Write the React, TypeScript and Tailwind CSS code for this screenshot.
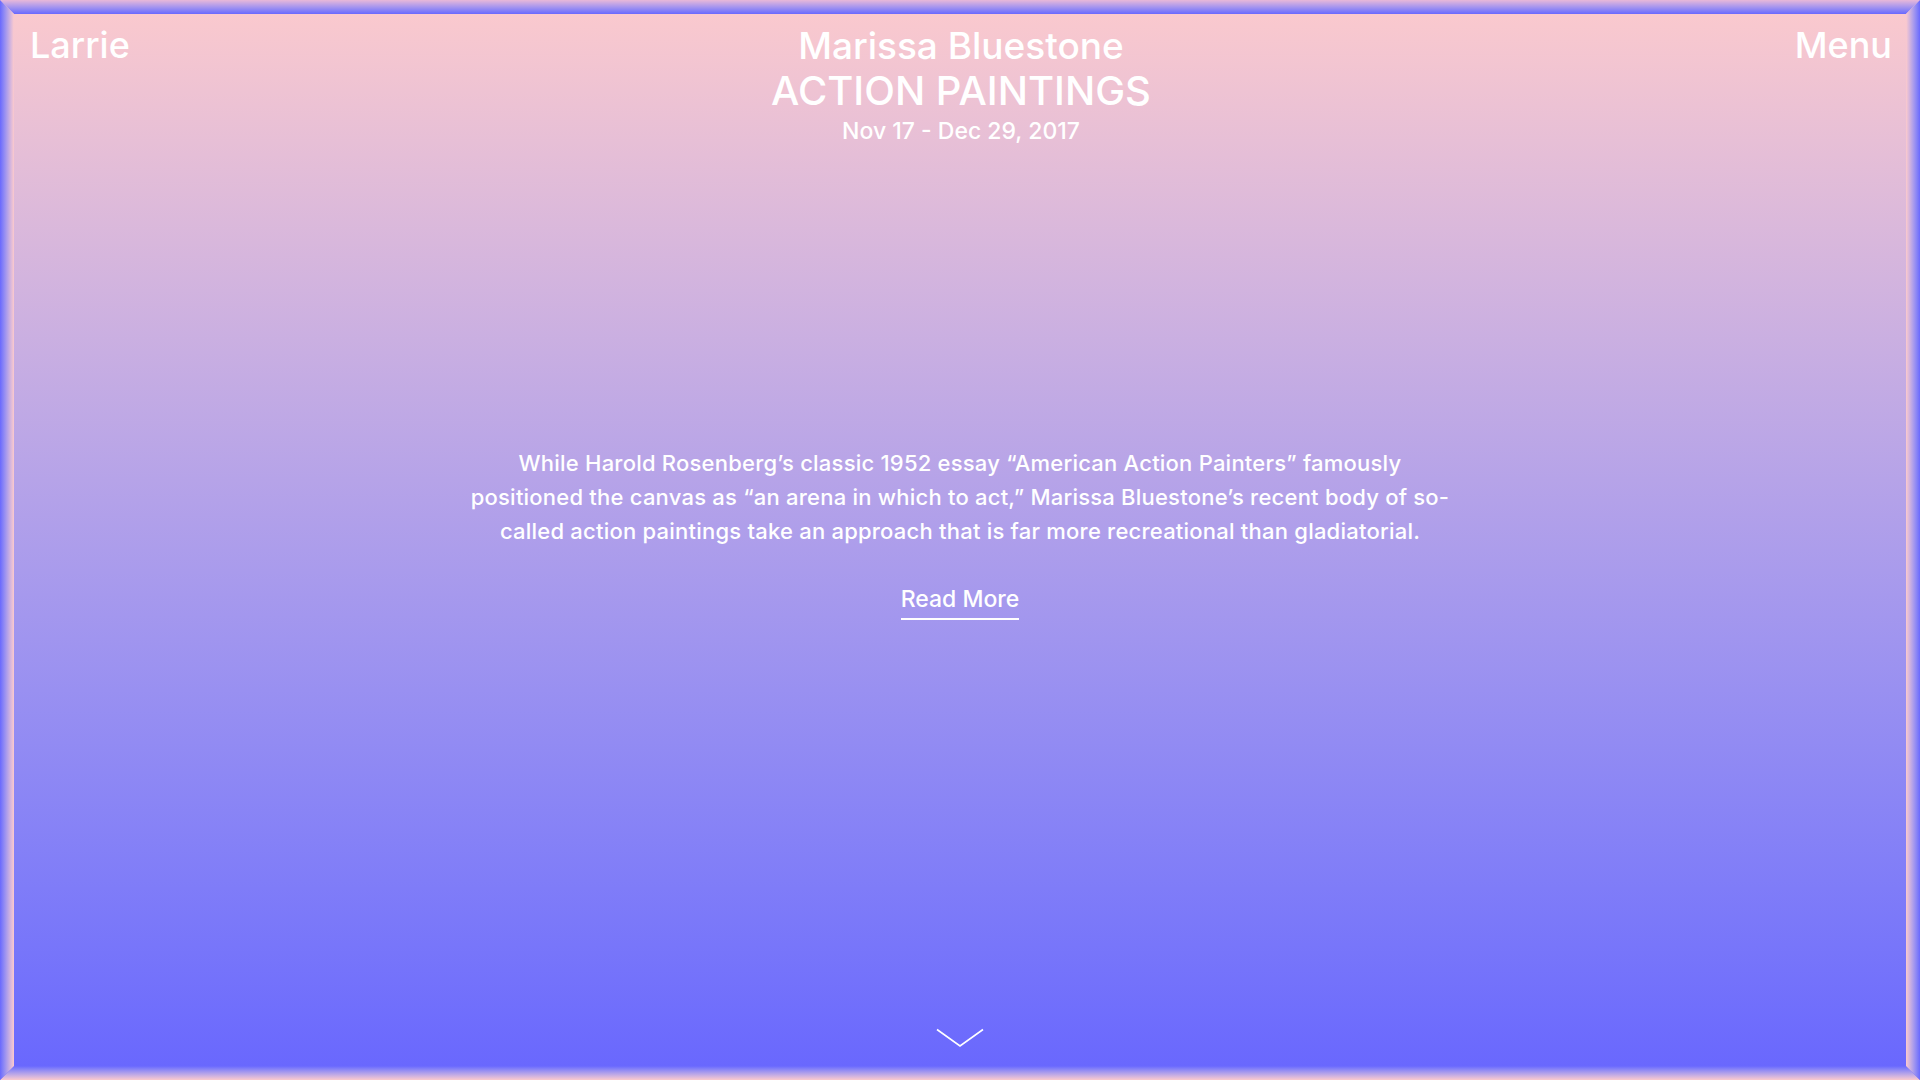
export default function App() {
  return (
    <div className="relative h-screen w-full overflow-hidden bg-gradient-to-b from-[#fccacd] to-[#6866fe] text-white font-['Inter','Liberation_Sans',sans-serif] font-medium">
      <div className="flex h-full flex-col items-center">
        <header className="grid w-full grid-cols-[1fr_auto_1fr] pl-[30px] pr-[28px] pt-[23px]">
          <a href="#" className="text-[36px] leading-[45px]">Larrie</a>
          <div className="flex flex-col items-center text-center">
            <h1 className="text-[37px] leading-[45px]">Marissa Bluestone</h1>
            <h2 className="text-[40px] leading-[45px] uppercase">Action Paintings</h2>
            <p className="mt-[3px] text-[23px] leading-[30px]">Nov 17 - Dec 29, 2017</p>
          </div>
          <a href="#" className="justify-self-end text-[36px] leading-[45px]">Menu</a>
        </header>

        <section className="mt-[300px] flex flex-col items-center">
          <p className="max-w-[990px] text-center text-[22px] leading-[34px] tracking-[0.01em]">
            While Harold Rosenberg’s classic 1952 essay “American Action Painters” famously positioned the canvas as “an arena in which to act,” Marissa Bluestone’s recent body of so-called action paintings take an approach that is far more recreational than gladiatorial.
          </p>
          <a href="#" className="mt-[37px] border-b-2 border-white pb-[5px] text-[23px] leading-[28px]">Read More</a>
        </section>

        <button className="mt-auto mb-[32px]">
          <svg width="48" height="20" viewBox="0 0 48 20" fill="none" stroke="white" strokeWidth="1.6">
            <path d="M1 1.5 L24 18 L47 1.5" />
          </svg>
        </button>
      </div>

      {/* bevelled frame */}
      <div className="pointer-events-none absolute inset-x-0 top-0 h-[14px] bg-gradient-to-b from-[#e8b8d8] to-[#6a68fe] [clip-path:polygon(0_0,100%_0,calc(100%_-_14px)_100%,14px_100%)]" />
      <div className="pointer-events-none absolute inset-x-0 bottom-0 h-[14px] bg-gradient-to-b from-[#6a68fe] to-[#fccacd] [clip-path:polygon(14px_0,calc(100%_-_14px)_0,100%_100%,0_100%)]" />
      <div className="pointer-events-none absolute inset-y-0 left-0 w-[14px] bg-gradient-to-r from-[#6a68fe] to-[#fccacd] [clip-path:polygon(0_0,100%_14px,100%_calc(100%_-_14px),0_100%)]" />
      <div className="pointer-events-none absolute inset-y-0 right-0 w-[14px] bg-gradient-to-r from-[#fccacd] to-[#6a68fe] [clip-path:polygon(0_14px,100%_0,100%_100%,0_calc(100%_-_14px))]" />
    </div>
  )
}
